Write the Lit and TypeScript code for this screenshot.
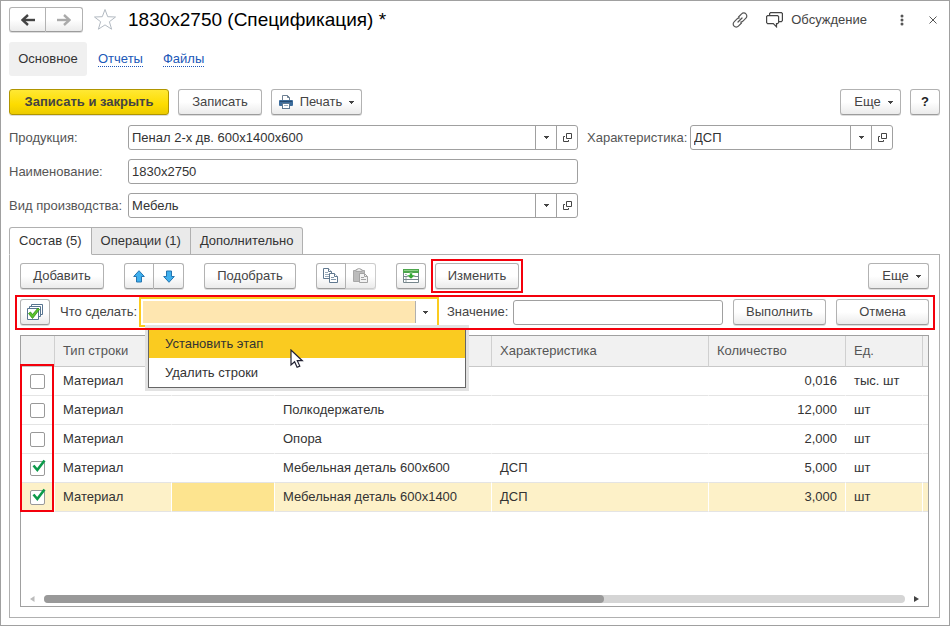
import { LitElement, html, css, svg } from "lit";
import { customElement, state } from "lit/decorators.js";
import { classMap } from "lit/directives/class-map.js";

interface Row {
  checked: boolean;
  type: string;
  name: string;
  feature: string;
  qty: string;
  unit: string;
  current?: boolean;
}

const ROWS: Row[] = [
  { checked: false, type: "Материал", name: "", feature: "", qty: "0,016", unit: "тыс. шт" },
  { checked: false, type: "Материал", name: "Полкодержатель", feature: "", qty: "12,000", unit: "шт" },
  { checked: false, type: "Материал", name: "Опора", feature: "", qty: "2,000", unit: "шт" },
  { checked: true, type: "Материал", name: "Мебельная деталь 600х600", feature: "ДСП", qty: "5,000", unit: "шт" },
  { checked: true, type: "Материал", name: "Мебельная деталь 600х1400", feature: "ДСП", qty: "3,000", unit: "шт", current: true },
];

const TABS = ["Состав (5)", "Операции (1)", "Дополнительно"];
const ACTIONS = ["Установить этап", "Удалить строки"];

const icon = (w: number, h: number, body: unknown) =>
  html`<svg class="icon" width=${w} height=${h} viewBox="0 0 ${w} ${h}" fill="none" aria-hidden="true">${body}</svg>`;

const caret = icon(5, 3, svg`<path d="M0 0h5v1H4v1H3v1H2V2H1V1H0z" fill="#444"/>`);
const openIcon = icon(9, 9, svg`<path d="M3.500 .5h5v5h-5zM2 3.500H.5v5h5V7" stroke="#444"/>`);
const backIcon = icon(14, 12, svg`<path d="M7 1 1.500 6 7 11" stroke="#444" stroke-width="2.400"/><path d="M2 6h12" stroke="#444" stroke-width="2.400"/>`);
const forwardIcon = icon(14, 12, svg`<path d="M7 1l5.500 5L7 11" stroke="#aaa" stroke-width="2.400"/><path d="M0 6h12" stroke="#aaa" stroke-width="2.400"/>`);
const starIcon = icon(24, 23, svg`<path d="M12 1.500 14.700 8.700 22.500 9 16.400 13.700 18.600 21.200 12 16.900 5.400 21.200 7.600 13.700 1.500 9 9.300 8.700z" stroke="#b3bac2"/>`);
const linkIcon = icon(16, 16, svg`<g stroke="#555" stroke-width="1.200" stroke-linecap="round"><path d="M6.500 5 9.600 1.900a2.900 2.900 0 0 1 4.300 0 2.900 2.900 0 0 1 0 4.200L10.700 9.300a2.900 2.900 0 0 1-2 .8"/><path d="M9.500 11 6.400 14.100a2.900 2.900 0 0 1-4.300 0 2.900 2.900 0 0 1 0-4.200L5.300 6.700a2.900 2.900 0 0 1 2-.8"/><path d="M6 10 10 6"/></g>`);
const chatIcon = icon(17, 16, svg`<g stroke="#444" stroke-width="1.200"><path d="M1.600 3.600h10l1 1v6l-1 1h-1.100v3.200l-3.200-3.200H1.600l-1-1v-6z"/><path d="M3.600 3.500V1.600l1-1h10.800l1 1v7l-1 1h-2.600"/></g>`);
const dotsIcon = icon(4, 12, svg`<g fill="#555"><circle cx="2" cy="2" r="1.500"/><circle cx="2" cy="6" r="1.500"/><circle cx="2" cy="10" r="1.500"/></g>`);
const closeIcon = icon(8, 8, svg`<path d="M.5.5l7 7M7.500.5l-7 7" stroke="#555"/>`);
const printIcon = icon(14, 14, svg`<path d="M3.500 5V.5h5l2 2V5" fill="#fff" stroke="#6c7f92"/><path d="M8.500.5v2h2" stroke="#6c7f92"/><rect y="5" width="14" height="6" rx="1" fill="#3c6c9c"/><path d="M1 6.500h12" stroke="#254a70"/><rect x="3.500" y="8.500" width="7" height="5" fill="#fff" stroke="#5d7892"/><path d="M5 10.500h4" stroke="#9db0c2"/>`);
const upIcon = icon(12, 13, svg`<path d="M6 .7 11.300 6.500H8.500v5.500h-5V6.500H.7z" fill="#3fb0ee" stroke="#2475b0"/>`);
const downIcon = icon(12, 13, svg`<path d="M6 12.300 11.300 6.500H8.500V1h-5v5.500H.7z" fill="#3fb0ee" stroke="#2475b0"/>`);
const copyIcon = icon(16, 16, svg`<g fill="#fff" stroke="#60788f"><path d="M.5.5h5l3 3v7h-8z"/><path d="M5.500.5v3h3"/><path d="M2 4.500h3M2 6.500h4M2 8.500h4" stroke="#9aabba"/><path d="M6.500 5.500h5l3 3v6h-8z"/><path d="M11.500 5.500v3h3"/><path d="M8 9.500h3M8 11.500h5" stroke="#8196a9"/></g>`);
const pasteIcon = icon(16, 16, svg`<path d="M.5 2.500h11v11H.5z" fill="#bcbcbc" stroke="#a8a8a8"/><path d="M3 3.500V1.500h1.500a1.500 1.500 0 0 1 3 0H9v2z" fill="#e6e6e6" stroke="#a8a8a8"/><path d="M6.500 5.500h5l3 3v6h-8z" fill="#f2f2f2" stroke="#a3a3a3"/><path d="M11.500 5.500v3h3M8 9.500h3M8 11.500h5" stroke="#a3a3a3"/>`);
const fillIcon = icon(16, 14, svg`<path d="M.5.5h15v13H.5z" fill="#fff" stroke="#76868c"/><path d="M0 0h16v4H0z" fill="#4ca64c"/><path d="M1 1.500h14" stroke="#8fd08a"/><path d="M1 7.500h14M1 10.500h14" stroke="#76868c"/><path d="M2 5.500h2M2 9h2M2 12h2" stroke="#9aa7ab"/><path d="M6.500 4h3v2h3L8 10 3.500 6h3z" fill="#34a834" stroke="#fff" stroke-width=".5"/>`);
const checksIcon = icon(16, 16, svg`<g fill="#fff" stroke="#587590"><path d="M4.500.5h11v10h-11z"/><path d="M2.500 2.500h11v10h-11z"/><path d="M.5 4.500h11v11H.5z"/></g><path d="M1.500 9.500l2-1.500 2 2.500 5.500-6.500 1.500 1.500L5.500 14.500z" fill="#5cc32a" stroke="#2d8a18" stroke-width=".8"/>`);
const tickIcon = icon(14, 14, svg`<path d="M1.500 6.500 5.300 11 12.500 1.500" stroke="#0c9a4a" stroke-width="2.600"/>`);
const leftIcon = icon(5, 6, svg`<path d="M4.500 0v6L0 3z" fill="#bbb"/>`);
const rightIcon = icon(5, 6, svg`<path d="M0 0v6l5-3z" fill="#444"/>`);
const pointerIcon = svg`<path d="M1 1v15l3.600-3.300 2.500 5.600 2.700-1.200-2.500-5.400h5z" fill="#fff" stroke="#223" stroke-width="1.200"/>`;

@customElement("app-root")
export class AppRoot extends LitElement {
  @state() private rows: Row[] = ROWS;

  static styles = css`
    :host { display: block; font: 13px/16px "Liberation Sans", Arial, sans-serif; color: #333; }
    * { box-sizing: border-box; }
    button, input { font: inherit; color: inherit; margin: 0; }
    .icon { display: block; flex: none; }

    .window { display: flex; flex-direction: column; min-height: 100vh; padding: 6px 9px 7px 8px; border: 1px solid #a0a0a0; background: #fff; }

    .btn { display: inline-flex; align-items: center; justify-content: center; height: 26px; padding: 0; border: 1px solid #b2b2b2; border-bottom-color: #9c9c9c; border-radius: 3px; background: linear-gradient(#fff 50%, #ebebeb); box-shadow: 0 1px 0 #ddd; color: #444; white-space: nowrap; flex: none; }
    .btn.primary { border-color: #b09500; background: linear-gradient(#ffe834, #fddc00 60%, #eccb00); font-weight: bold; width: 160px; }
    .btn.more { width: 61px; padding-left: 6px; gap: 7px; }
    .btn.print { width: 91px; gap: 7px; }
    .btn.square { width: 30px; }
    .btn.help { color: #222; font-weight: bold; }
    .btn.wide { width: 93px; }
    .btn.mid { width: 84px; }
    .btn.pick { width: 92px; }
    .pair { display: flex; flex: none; }
    .pair .btn:first-child { border-radius: 3px 0 0 3px; }
    .pair .btn:last-child { border-radius: 0 3px 3px 0; border-left: 0; }
    .pair.nav .btn { width: 37px; height: 25px; }
    .btn:disabled { border-color: #ccc; }
    .push { margin-left: auto; }

    .header { display: flex; align-items: center; height: 25px; }
    .plain { display: flex; align-items: center; gap: 8px; padding: 0; border: 0; background: none; color: #444; }
    .star { margin: 0 11px 0 10px; }
    h1 { margin: 0; font-size: 19px; line-height: 24px; font-weight: normal; color: #000; white-space: nowrap; }
    .tools { display: flex; align-items: center; margin-left: auto; padding-right: 3px; }
    .tools .chat { margin: 0 33px 0 18px; }
    .tools .close { margin-left: 25px; }

    .sections { display: flex; align-items: center; gap: 20px; height: 34px; margin-top: 10px; }
    .sections .current { width: 78px; margin-right: -9px; line-height: 34px; text-align: center; background: #f0f0f0; border-radius: 3px; }
    .sections a { color: #2058b8; text-decoration: none; border-bottom: 1px dotted #2058b8; line-height: 14px; }

    .commands { display: flex; gap: 9px; margin-top: 13px; }

    .form { display: grid; grid-template-columns: 119px minmax(0, 450fr) 112px minmax(0, 203fr) 47px; grid-auto-rows: 25px; row-gap: 9px; align-items: center; margin-top: 10px; }
    .form label { color: #555; white-space: nowrap; }
    .form label.first { grid-column: 1; }
    .form label.second { padding-left: 9px; }
    .field { display: flex; height: 25px; border: 1px solid #a0a0a0; border-radius: 3px; background: #fff; overflow: hidden; }
    .field input { flex: 1; min-width: 0; border: 0; padding: 0 3px; background: none; outline: 0; }
    .field button { display: flex; align-items: center; justify-content: center; width: 21px; padding: 0; border: 0; border-left: 1px solid #a0a0a0; background: none; }

    .tabs { display: flex; height: 28px; margin-top: 9px; position: relative; z-index: 1; }
    .tab { padding: 0 9px; border: 1px solid #b0b0b0; border-left-width: 0; background: #eaeaea; white-space: nowrap; }
    .tab:first-child { border-left-width: 1px; border-radius: 3px 0 0 0; }
    .tab:last-child { border-radius: 0 3px 0 0; }
    .tab.active { background: #fff; border-bottom-color: #fff; }

    .panel { display: flex; flex-direction: column; flex: 1; gap: 10px; margin-top: -1px; padding: 8px 10px 10px; border: 1px solid #b0b0b0; }
    .toolbar { display: flex; align-items: center; gap: 20px; }
    .marked { position: relative; display: flex; margin-left: -11px; }
    .marked::after, .editbar::after, .mark { content: ""; position: absolute; border: 2px solid #f4000c; pointer-events: none; z-index: 5; }
    .marked::after { inset: -4px; }

    .editbar { position: relative; display: flex; align-items: center; height: 26px; color: #444; }
    .editbar::after { inset: -4px -6px -5px -5px; }
    .editbar label { white-space: nowrap; }
    .editbar .what { width: 89px; padding-left: 10px; }
    .editbar .value { width: 74px; padding-left: 8px; }
    .editbar .field { flex: 208 1 0; margin-right: 10px; }
    .editbar .wide + .wide { margin-left: 10px; }
    .combo { position: relative; flex: 292 1 0; height: 30px; border: 2px solid #fbcb1e; padding: 2px; display: flex; background: #fff; }
    .combo input { flex: 1; min-width: 0; border: 0; padding: 0 3px; background: #fee6b0; outline: 0; }
    .combo button { display: flex; align-items: center; justify-content: center; width: 20px; padding: 0; border: 0; border-left: 1px solid #b0b0b0; background: none; }
    .menu { position: absolute; top: 29px; left: 7px; width: 318px; z-index: 3; margin: 0; padding: 0; list-style: none; border: 1px solid #666; background: #fff; box-shadow: 0 0 0 3px #e2e2e2; color: #333; }
    .menu li { height: 29px; line-height: 29px; padding-left: 16px; }
    .menu li.active { background: #facb20; }
    .pointer { position: absolute; left: 141px; top: 20px; }

    .grid { position: relative; display: flex; flex-direction: column; flex: 1; min-height: 260px; border: 1px solid #a0a0a0; }
    table { width: 100%; table-layout: fixed; border-collapse: separate; border-spacing: 0; }
    th, td { padding: 0 8px; text-align: left; font-weight: normal; white-space: nowrap; overflow: hidden; border-right: 1px solid transparent; }
    th { height: 31px; background: #f1f1f1; color: #555; border-right-color: #d0d0d0; border-bottom: 1px solid #c8c8c8; }
    td { height: 29px; border-bottom: 1px solid #e4e4e4; }
    th:last-child, td:last-child { border-right: 0; padding: 0; }
    td.qty { text-align: right; }
    tr.current td { background: #fdf1c8; border-right-color: #fff; }
    tr.current td.stage { background: #fde48f; }
    .c-check { width: 34px; }
    .c-type { width: 117px; }
    .c-stage { width: 103px; }
    .c-qty { width: 137px; }
    .c-unit { width: 77px; }
    .c-rest { width: 5px; }
    .check { position: relative; display: block; width: 15px; height: 15px; margin-left: 1px; }
    .check input { display: block; appearance: none; width: 15px; height: 15px; border: 1px solid #999; border-radius: 2px; background: #fff; }
    .check .icon { position: absolute; left: 2px; top: -2px; pointer-events: none; }
    .mark { top: 28px; left: -1px; width: 34px; height: 148px; }

    .scroll { display: flex; align-items: center; justify-content: space-between; height: 8px; margin: auto 9px 3px; }
    .track { flex: 1; height: 8px; margin: 0 9px; border-radius: 4px; background: #d5d5d5; }
    .thumb { width: 65%; height: 8px; border-radius: 4px; background: #999; }
  `;

  private toggle(index: number) {
    this.rows = this.rows.map((r, i) => (i === index ? { ...r, checked: !r.checked } : r));
  }

  private lookup(id: string, value: string) {
    return html`<div class="field">
      <input id=${id} type="text" .value=${value} />
      <button aria-label="Выбрать из списка">${caret}</button>
      <button aria-label="Открыть">${openIcon}</button>
    </div>`;
  }

  private renderHeader() {
    return html`
      <header class="header">
        <div class="pair nav">
          <button class="btn" aria-label="Назад">${backIcon}</button>
          <button class="btn" aria-label="Вперед">${forwardIcon}</button>
        </div>
        <button class="plain star" aria-label="Избранное">${starIcon}</button>
        <h1>1830х2750 (Спецификация) *</h1>
        <div class="tools">
          <button class="plain" aria-label="Ссылка">${linkIcon}</button>
          <button class="plain chat">${chatIcon}Обсуждение</button>
          <button class="plain" aria-label="Меню">${dotsIcon}</button>
          <button class="plain close" aria-label="Закрыть">${closeIcon}</button>
        </div>
      </header>
      <nav class="sections">
        <span class="current">Основное</span>
        <a href="#reports">Отчеты</a>
        <a href="#files">Файлы</a>
      </nav>
      <div class="commands">
        <button class="btn primary">Записать и закрыть</button>
        <button class="btn mid">Записать</button>
        <button class="btn print">${printIcon}<span>Печать</span>${caret}</button>
        <button class="btn more push">Еще ${caret}</button>
        <button class="btn square help">?</button>
      </div>`;
  }

  private renderForm() {
    return html`<div class="form">
      <label class="first" for="product">Продукция:</label>
      ${this.lookup("product", "Пенал 2-х дв. 600х1400х600")}
      <label class="second" for="feature">Характеристика:</label>
      ${this.lookup("feature", "ДСП")}
      <label class="first" for="name">Наименование:</label>
      <div class="field"><input id="name" type="text" .value=${"1830х2750"} /></div>
      <label class="first" for="kind">Вид производства:</label>
      ${this.lookup("kind", "Мебель")}
    </div>`;
  }

  private renderToolbar() {
    return html`<div class="toolbar">
      <button class="btn mid">Добавить</button>
      <div class="pair">
        <button class="btn square" aria-label="Вверх">${upIcon}</button>
        <button class="btn square" aria-label="Вниз">${downIcon}</button>
      </div>
      <button class="btn pick">Подобрать</button>
      <div class="pair">
        <button class="btn square" aria-label="Копировать">${copyIcon}</button>
        <button class="btn square" disabled aria-label="Вставить">${pasteIcon}</button>
      </div>
      <button class="btn square" aria-label="Заполнить">${fillIcon}</button>
      <div class="marked"><button class="btn mid">Изменить</button></div>
      <button class="btn more push">Еще ${caret}</button>
    </div>`;
  }

  private renderEditBar() {
    return html`<div class="editbar">
      <button class="btn square" aria-label="Отметить все">${checksIcon}</button>
      <label class="what" for="action">Что сделать:</label>
      <div class="combo">
        <input id="action" type="text" role="combobox" aria-expanded="true" aria-controls="actions" />
        <button aria-label="Показать список">${caret}</button>
        <ul class="menu" id="actions" role="listbox">
          ${ACTIONS.map((a, i) => html`<li role="option" class=${classMap({ active: i === 0 })} aria-selected=${i === 0}>${a}</li>`)}
          <svg class="pointer" width="14" height="20" viewBox="0 0 14 20" aria-hidden="true">${pointerIcon}</svg>
        </ul>
      </div>
      <label class="value" for="value">Значение:</label>
      <div class="field"><input id="value" type="text" /></div>
      <button class="btn wide">Выполнить</button>
      <button class="btn wide">Отмена</button>
    </div>`;
  }

  private renderGrid() {
    return html`<div class="grid">
      <table>
        <colgroup>
          <col class="c-check" /><col class="c-type" /><col class="c-stage" /><col /><col />
          <col class="c-qty" /><col class="c-unit" /><col class="c-rest" />
        </colgroup>
        <thead>
          <tr><th></th><th>Тип строки</th><th></th><th></th><th>Характеристика</th><th>Количество</th><th>Ед.</th><th></th></tr>
        </thead>
        <tbody>
          ${this.rows.map((r, i) => html`
            <tr class=${classMap({ current: !!r.current })}>
              <td><label class="check"><input type="checkbox" aria-label="Выбрать строку" .checked=${r.checked} @change=${() => this.toggle(i)} />${r.checked ? tickIcon : ""}</label></td>
              <td>${r.type}</td>
              <td class="stage"></td>
              <td>${r.name}</td>
              <td>${r.feature}</td>
              <td class="qty">${r.qty}</td>
              <td>${r.unit}</td>
              <td></td>
            </tr>`)}
        </tbody>
      </table>
      <div class="mark"></div>
      <div class="scroll">${leftIcon}<div class="track"><div class="thumb"></div></div>${rightIcon}</div>
    </div>`;
  }

  render() {
    return html`<main class="window">
      ${this.renderHeader()}
      ${this.renderForm()}
      <div class="tabs" role="tablist">
        ${TABS.map((t, i) => html`<button role="tab" aria-selected=${i === 0} class=${classMap({ tab: true, active: i === 0 })}>${t}</button>`)}
      </div>
      <section class="panel">
        ${this.renderToolbar()}
        ${this.renderEditBar()}
        ${this.renderGrid()}
      </section>
    </main>`;
  }
}
